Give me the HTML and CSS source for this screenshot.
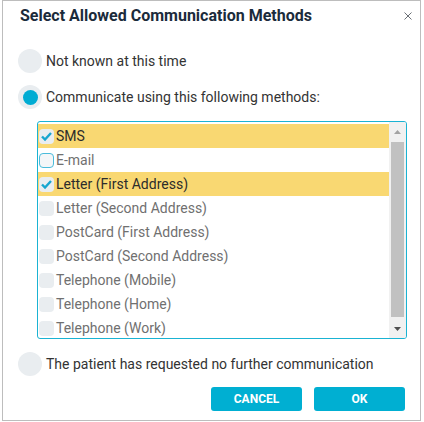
FILE: index.html
```html
<!DOCTYPE html>
<html>
<head>
<meta charset="utf-8">
<link rel="stylesheet" href="styles.css">
</head>
<body>
<div class="dialog">
  <div class="header">
    <div class="title">Select Allowed Communication Methods</div>
    <svg class="close" width="8" height="8" viewBox="0 0 8 8"><path d="M0.5 0.5L7.5 7.5M7.5 0.5L0.5 7.5" stroke="#5a6066" stroke-width="0.9" fill="none"/></svg>
  </div>
  <div class="radio-row first">
    <span class="radio"></span>
    <span class="radio-label">Not known at this time</span>
  </div>
  <div class="radio-row">
    <span class="radio checked"><span class="dot"></span></span>
    <span class="radio-label">Communicate using this following methods:</span>
  </div>
  <div class="listbox">
    <div class="items">
      <div class="item sel"><span class="cb"><svg width="15" height="15" viewBox="0 0 15 15"><path d="M3 7.5L6 10.5L12 4" stroke="#17a6cf" stroke-width="2.4" fill="none"/></svg></span><span class="txt">SMS</span></div>
      <div class="item"><span class="cb focus"></span><span class="txt">E-mail</span></div>
      <div class="item sel"><span class="cb"><svg width="15" height="15" viewBox="0 0 15 15"><path d="M3 7.5L6 10.5L12 4" stroke="#17a6cf" stroke-width="2.4" fill="none"/></svg></span><span class="txt">Letter (First Address)</span></div>
      <div class="item"><span class="cb"></span><span class="txt">Letter (Second Address)</span></div>
      <div class="item"><span class="cb"></span><span class="txt">PostCard (First Address)</span></div>
      <div class="item"><span class="cb"></span><span class="txt">PostCard (Second Address)</span></div>
      <div class="item"><span class="cb"></span><span class="txt">Telephone (Mobile)</span></div>
      <div class="item"><span class="cb"></span><span class="txt">Telephone (Home)</span></div>
      <div class="item"><span class="cb"></span><span class="txt">Telephone (Work)</span></div>
    </div>
    <div class="scrollbar">
      <div class="arrow up"><svg width="7" height="4" viewBox="0 0 7 4"><path d="M0 4L3.5 0L7 4Z" fill="#a3a3a3"/></svg></div>
      <div class="track"><div class="thumb"></div></div>
      <div class="arrow down"><svg width="7" height="4" viewBox="0 0 7 4"><path d="M0 0L3.5 4L7 0Z" fill="#505050"/></svg></div>
    </div>
  </div>
  <div class="radio-row last">
    <span class="radio"></span>
    <span class="radio-label">The patient has requested no further communication</span>
  </div>
  <div class="buttons">
    <button class="btn">CANCEL</button>
    <button class="btn">OK</button>
  </div>
</div>
</body>
</html>
```

FILE: styles.css
```css
html, body {
  margin: 0;
  padding: 0;
  background: #fff;
}
body {
  font-family: Roboto, "Liberation Sans", sans-serif;
}
.dialog {
  box-sizing: border-box;
  margin-left: 2px;
  width: 419px;
  height: 421px;
  border: 1px solid #bdbdbd;
  display: flex;
  flex-direction: column;
}
.header {
  display: flex;
  align-items: center;
  justify-content: space-between;
  padding: 5px 8px 0 17px;
  height: 20px;
}
.title {
  font-size: 16px;
  font-weight: 700;
  color: #1b2b3b;
  line-height: 20px;
}
.close {
  display: block;
  margin-top: 0px;
}
.radio-row {
  display: flex;
  align-items: center;
  height: 24px;
  padding-left: 15px;
  margin-top: 12px;
}
.radio-row.first {
  margin-top: 23px;
}
.radio-row.last {
  margin-top: 13px;
}
.radio {
  box-sizing: border-box;
  width: 24px;
  height: 24px;
  border-radius: 50%;
  background: #e9edf0;
  display: flex;
  align-items: center;
  justify-content: center;
  flex: none;
}
.dot {
  width: 15px;
  height: 15px;
  border-radius: 50%;
  background: #00acd3;
}
.radio-label {
  margin-left: 4px;
  font-size: 14px;
  color: #333;
  line-height: 20px;
}
.listbox {
  box-sizing: border-box;
  margin-top: 12px;
  margin-left: 34px;
  width: 370px;
  height: 218px;
  border: 1px solid #1ab3d3;
  border-radius: 3px;
  display: flex;
  overflow: hidden;
}
.items {
  flex: 1;
  padding-top: 2px;
  overflow: hidden;
}
.item {
  height: 24px;
  display: flex;
  align-items: center;
}
.item.sel {
  background: #f9d872;
}
.cb {
  box-sizing: border-box;
  width: 15px;
  height: 15px;
  margin-left: 1px;
  border-radius: 4px;
  background: #e9edf0;
  flex: none;
  display: flex;
}
.cb svg {
  display: block;
}
.cb.focus {
  background: #f4f6f8;
  border: 1.5px solid #4bbcdb;
}
.txt {
  margin-left: 2px;
  font-size: 14px;
  color: #707070;
  line-height: 18px;
}
.item.sel .txt {
  color: #2c2c2c;
}
.scrollbar {
  width: 17px;
  flex: none;
  background: #f1f1f1;
  display: flex;
  flex-direction: column;
}
.arrow {
  height: 18px;
  display: flex;
  align-items: center;
  justify-content: center;
  flex: none;
}
.arrow svg {
  display: block;
}
.arrow.up {
  padding-top: 1px;
}
.track {
  flex: 1;
  padding: 1px 2px 0 2px;
}
.thumb {
  height: 175px;
  background: #c1c1c1;
}
.buttons {
  display: flex;
  justify-content: flex-end;
  gap: 12px;
  padding-right: 15px;
  margin-top: 11px;
}
.btn {
  width: 91px;
  height: 24px;
  border: none;
  border-radius: 3px;
  background: #00afd2;
  color: #fff;
  font-family: Roboto, "Liberation Sans", sans-serif;
  font-size: 12px;
  font-weight: 700;
  padding: 0;
}
```
